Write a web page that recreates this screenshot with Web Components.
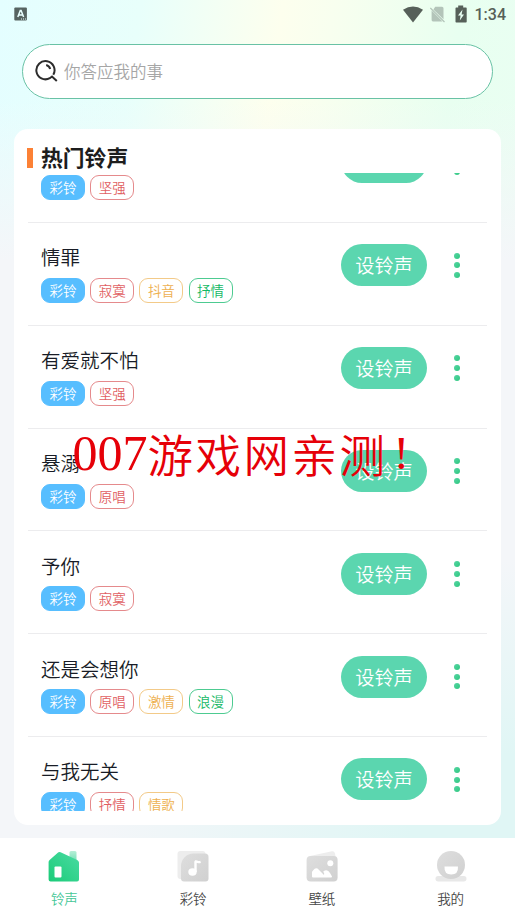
<!DOCTYPE html>
<html lang="zh-CN">
<head>
<meta charset="utf-8">
<title>热门铃声</title>
<style>
html,body{margin:0;height:100%;overflow:hidden}
body{font-family:Roboto,"Noto Sans CJK SC",sans-serif}
</style>
</head>
<body>
<ringtone-app></ringtone-app>
<script>
const define = (name, html, setup) => customElements.define(name, class extends HTMLElement {
  constructor() {
    super();
    const root = this.attachShadow({ mode: 'open' });
    root.innerHTML = html;
  }
  connectedCallback() { if (setup) setup(this, this.shadowRoot); }
});

define('status-bar', `
<style>
:host{display:flex;height:28px;box-sizing:border-box;align-items:center;padding:0 9px 0 14px;color:#566059;font:500 16px/28px Roboto,sans-serif}
svg{display:block;flex:none}
.sp{flex:1}
.wifi{margin-right:7px}.sim{margin-right:10px}.bat{margin-right:8px}
.time{padding-top:2px}
</style>
<svg width="14" height="15" viewBox="0 0 14 15"><rect x=".3" y=".5" width="12.600" height="13" rx="1" fill="#566361"/><path d="M3.800 10 6.300 3.500h.8L9.600 10M4.800 8h3.800" fill="none" stroke="#e9ffff" stroke-width="1.500"/><path d="M7 12h5" stroke="#e9ffff" stroke-width="1" stroke-dasharray="1 1"/></svg>
<span class="sp"></span>
<svg class="wifi" width="20" height="17" viewBox="0 0 20 17"><path d="M0 3.800Q10-3 20 3.800L10 16.500Z" fill="#566059"/></svg>
<svg class="sim" width="15" height="17" viewBox="0 0 15 17"><path d="M5.200.8H12a1.500 1.500 0 0 1 1.500 1.500V13.200L3.400 3.400ZM1.600 4.500 12.500 15.500H3a1.400 1.400 0 0 1-1.400-1.400Z" fill="#b3c4b9"/><path d="m.3 2 14.200 14" stroke="#b3c4b9" stroke-width="1.200"/></svg>
<svg class="bat" width="12" height="18" viewBox="0 0 12 18"><path d="M3.200.5h5v2H11a.7.7 0 0 1 .7.7v13.600a.7.7 0 0 1-.7.7H1.200a.7.7 0 0 1-.7-.7V3.200a.7.7 0 0 1 .7-.7h2Z" fill="#566059"/><path d="M7.500 4.500 3 10.500h2.600L4.800 15.500 9 9.500H6.600Z" fill="#e8fff3"/></svg>
<span class="time">1:34</span>`);

define('search-box', `
<style>
:host{display:flex;align-items:center;box-sizing:border-box;height:55px;margin:16px 22px 0;padding-left:12px;border:1px solid #69c2a5;border-radius:28px;background:#fff;color:#a6a6a6;font-size:16.500px;font-weight:350}
svg{margin-right:6px}
span{line-height:24px;padding-top:2px}
</style>
<svg width="23" height="23" viewBox="0 0 23 23" fill="none" stroke="#2c2c2c" stroke-width="2"><path d="M18.300 14.800A9.100 9.100 0 1 0 14.800 18.200L17 16.500 21.800 21"/><path d="M11.200 5a5.500 5.500 0 0 1 4 4"/></svg>
<span><slot></slot></span>`);

define('song-tag', `
<style>
:host{display:block;box-sizing:border-box;width:44px;height:25px;border:1px solid #e58a8c;border-radius:9px;text-align:center;font-size:13.500px;font-weight:350;line-height:24.500px;color:#e15f63}
:host([kind=blue]){background:#57beff;border-color:#57beff;color:#fff}
:host([kind=yellow]){color:#eeb04f;border-color:#f3ca88}
:host([kind=green]){color:#12b864;border-color:#4dcb91}
</style><slot></slot>`);

define('set-button', `
<style>
:host{display:block;width:86px;height:42px;border-radius:21px;background:#5bd6af;color:#fff;text-align:center;font-size:19.200px;font-weight:350;line-height:45px}
</style><slot></slot>`);

define('more-dots', `
<style>
:host{display:flex;flex-direction:column;gap:3.700px;width:6px}
i{width:6px;height:6px;border-radius:50%;background:linear-gradient(135deg,#56d5a4,#2fc77f)}
</style><i></i><i></i><i></i>`);

define('song-row', `
<style>
:host{display:flex;box-sizing:border-box;height:102.850px;flex:none;border-bottom:1px solid #ececee;padding-left:13px}
.info{flex:1;padding-top:21.300px}
.title{height:30px;line-height:30px;font-size:19.500px;font-weight:350;color:#181c26}
.tags{display:flex;gap:5.200px;margin-top:3.700px}
set-button{margin-top:21.300px}
more-dots{margin:29.700px 27px 0}
</style>
<div class="info"><div class="title"></div><div class="tags"><slot></slot></div></div>
<set-button>设铃声</set-button><more-dots></more-dots>`,
(el, root) => { root.querySelector('.title').textContent = el.getAttribute('name'); });

define('song-card', `
<style>
:host{display:flex;flex-direction:column;box-sizing:border-box;height:696px;margin:30px 14px 0;padding:0 14px;background:#fff;border-radius:14px}
h2{flex:none;display:flex;align-items:center;gap:8px;height:44px;margin:0;padding-top:14px;box-sizing:border-box;font-size:21.800px;line-height:30px;font-weight:700;color:#1d1d1d}
h2::before{content:"";width:6px;height:20px;background:#fc8135;margin-left:-1px;margin-top:-1px}
h2 span{padding-top:2px}
.list{height:638px;overflow:hidden}
.list>div{margin-top:-52.900px}
</style>
<h2><span><slot name="title"></slot></span></h2>
<div class="list"><div><slot></slot></div></div>`);

define('nav-item', `
<style>
:host{display:flex;flex-direction:column;align-items:center;flex:1;padding-top:10px;color:#484848;font-size:13.500px;font-weight:350}
:host([active]){color:#46c797}
span{line-height:20px;margin-top:5px}
::slotted(svg){display:block}
</style><slot name="icon"></slot><span><slot></slot></span>`);

define('nav-bar', `
<style>
:host{display:flex;height:77px;margin-top:13px;background:#fff}
</style>
<nav-item active><svg slot="icon" width="36" height="36" viewBox="0 0 36 36"><defs><linearGradient id="house" x1="1" x2="0" y2="1"><stop stop-color="#4bdba3"/><stop offset="1" stop-color="#1bcb78"/></linearGradient><linearGradient id="chimney" x2="0" y2="1"><stop stop-color="#b7efd7"/><stop offset="1" stop-color="#5bd9a9"/></linearGradient></defs><rect x="23.500" y="3" width="7" height="14" rx="1.500" fill="url(#chimney)"/><path d="M2.600 14Q2.600 13 3.600 12L11.800 4.700Q13 3.500 14.600 4.300L31.200 12Q33 13 33 14.500V31.500Q33 33.500 31 33.500H4.600Q2.600 33.500 2.600 31.500Z" fill="url(#house)"/><rect x="8.500" y="18.500" width="7" height="11" rx="1" fill="#fff"/></svg>铃声</nav-item>
<nav-item><svg slot="icon" width="36" height="36" viewBox="0 0 36 36"><defs><linearGradient id="note" x2="1" y2="1"><stop stop-color="#dedede"/><stop offset="1" stop-color="#d0d0d0"/></linearGradient></defs><rect x="2.500" y="3" width="28" height="28" rx="3" fill="#ededed"/><path d="M6 18A12.500 12.500 0 0 1 18.500 5.500H30Q33.500 5.500 33.500 9V30.500Q33.500 33.500 30.500 33.500H9Q6 33.500 6 30.500Z" fill="url(#note)"/><ellipse cx="17.500" cy="24" rx="4.200" ry="3.700" fill="#fff"/><path d="M20.500 24V14Q20.500 13 21.500 13.500 23 14.500 25.600 13.800" stroke="#fff" stroke-width="2.400" fill="none"/></svg>彩铃</nav-item>
<nav-item><svg slot="icon" width="36" height="36" viewBox="0 0 36 36"><defs><linearGradient id="photo" x2="1" y2="1"><stop stop-color="#dedede"/><stop offset="1" stop-color="#d0d0d0"/></linearGradient></defs><path d="M6 8 28 3.200Q30.500 3 31 5.500L32 11H5Z" fill="#ededed"/><rect x="2.600" y="8" width="31" height="25.500" rx="4" fill="url(#photo)"/><circle cx="26.300" cy="15.300" r="3" fill="#fff"/><path d="M8 28.500V24Q8 23.500 9 22.500 12 18.600 14.800 21.800L20 27Q20.800 25.500 19.200 23.500 23.500 20.500 26 25L28 28.500Q28.300 29.500 27 29.500H9Q8 29.500 8 28.500Z" fill="#fff"/></svg>壁纸</nav-item>
<nav-item><svg slot="icon" width="36" height="36" viewBox="0 0 36 36"><defs><linearGradient id="face" x2="1" y2="1"><stop stop-color="#dedede"/><stop offset="1" stop-color="#d0d0d0"/></linearGradient></defs><rect x="2.500" y="28" width="31" height="5.500" rx="2.700" fill="#e8e8e8"/><circle cx="18" cy="17" r="14" fill="url(#face)"/><path d="M11.500 18.500H25Q25.500 26.500 18.200 26.500 11 26.500 11.500 18.500Z" fill="#fff"/></svg>我的</nav-item>`);

define('water-mark', `
<style>
:host{position:absolute;left:72.500px;top:420px;height:70px;white-space:nowrap;color:#e60008;display:flex}
b{font:400 50px/67px "Liberation Serif",serif;width:75px}
span{font:350 45.500px/67px "Noto Sans CJK SC",sans-serif;letter-spacing:2.500px}
i{font:400 47px/67px "Liberation Serif",serif;margin-left:6px}
</style><b>007</b><span>游戏网亲测</span><i>!</i>`);

define('ringtone-app', `
<style>
:host{display:flex;flex-direction:column;position:relative;width:515px;height:915px;overflow:hidden;
background:
radial-gradient(ellipse 420px 260px at 100% 820px,#e0f6f5 0,#e0f6f5 25%,rgba(224,246,245,0) 100%),
linear-gradient(180deg,rgba(244,246,249,0) 100px,#f4f6f9 260px),
linear-gradient(98deg,#e4feff 0,#e8fffb 22%,#fdffee 44%,#f8ffef 52%,#e8fff0 72%,#ebfdf4 100%)}
</style>
<status-bar></status-bar>
<search-box>你答应我的事</search-box>
<song-card><span slot="title">热门铃声</span>
<song-row name=""><song-tag kind="blue">彩铃</song-tag><song-tag>坚强</song-tag></song-row>
<song-row name="情罪"><song-tag kind="blue">彩铃</song-tag><song-tag>寂寞</song-tag><song-tag kind="yellow">抖音</song-tag><song-tag kind="green">抒情</song-tag></song-row>
<song-row name="有爱就不怕"><song-tag kind="blue">彩铃</song-tag><song-tag>坚强</song-tag></song-row>
<song-row name="悬溺"><song-tag kind="blue">彩铃</song-tag><song-tag>原唱</song-tag></song-row>
<song-row name="予你"><song-tag kind="blue">彩铃</song-tag><song-tag>寂寞</song-tag></song-row>
<song-row name="还是会想你"><song-tag kind="blue">彩铃</song-tag><song-tag>原唱</song-tag><song-tag kind="yellow">激情</song-tag><song-tag kind="green">浪漫</song-tag></song-row>
<song-row name="与我无关"><song-tag kind="blue">彩铃</song-tag><song-tag>抒情</song-tag><song-tag kind="yellow">情歌</song-tag></song-row>
</song-card>
<nav-bar></nav-bar>
<water-mark></water-mark>`);
</script>
</body>
</html>
